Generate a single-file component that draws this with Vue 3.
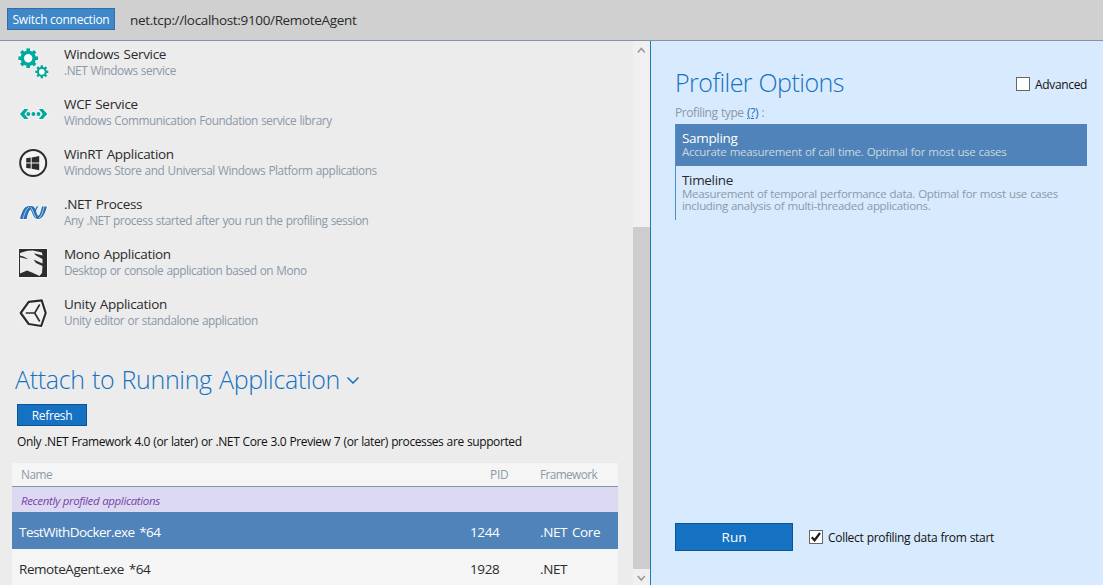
<script setup>
import { ref } from 'vue'

const apps = [
  { id: 'service', name: 'Windows Service', desc: '.NET Windows service' },
  { id: 'wcf', name: 'WCF Service', desc: 'Windows Communication Foundation service library' },
  { id: 'winrt', name: 'WinRT Application', desc: 'Windows Store and Universal Windows Platform applications' },
  { id: 'net', name: '.NET Process', desc: 'Any .NET process started after you run the profiling session' },
  { id: 'mono', name: 'Mono Application', desc: 'Desktop or console application based on Mono' },
  { id: 'unity', name: 'Unity Application', desc: 'Unity editor or standalone application' },
]
const processes = [
  { name: 'TestWithDocker.exe *64', pid: 1244, framework: '.NET Core' },
  { name: 'RemoteAgent.exe *64', pid: 1928, framework: '.NET' },
]
const selected = ref(1244)
const teeth = [0, 45, 90, 135, 180, 225, 270, 315]
</script>

<template>
  <div class="window">
    <header class="topbar">
      <button class="btn switch"><span>Switch connection</span></button>
      <span class="address">net.tcp://localhost:9100/RemoteAgent</span>
    </header>
    <div class="body">
      <section class="left">
        <div class="content">
          <ul class="apps">
            <li v-for="a in apps" :key="a.id" class="app">
              <svg class="icon" width="36" height="36" viewBox="0 0 36 36">
                <g v-if="a.id === 'service'" fill="#00a99d">
                  <g transform="translate(13.2 13.2)">
                    <circle r="9.5" fill="#f6f6f6" />
                    <rect v-for="t in teeth" :key="t" x="-1.8" y="-9.8" width="3.6" height="5" :transform="`rotate(${t})`" />
                    <circle r="6" fill="#fff" stroke="#00a99d" stroke-width="3.6" />
                  </g>
                  <g transform="translate(26.8 26.8)">
                    <circle r="6.5" fill="#f6f6f6" />
                    <rect v-for="t in teeth" :key="t" x="-1.2" y="-6.5" width="2.4" height="3" :transform="`rotate(${t})`" />
                    <circle r="3.9" fill="#fff" stroke="#00a99d" stroke-width="2" />
                  </g>
                </g>
                <g v-else-if="a.id === 'wcf'" transform="translate(.4 1)">
                  <path d="M9 13h4l-4 5 4 5H9l-4.500-5zM27.400 13h-4l4 5-4 5h4l4.500-5z" fill="#00a99d" stroke="#f6f6f6" stroke-width="1.8" paint-order="stroke" />
                  <g fill="#00a99d"><circle cx="12.9" cy="18" r="1.9" /><circle cx="18" cy="18" r="1.9" /><circle cx="23.1" cy="18" r="1.9" /></g>
                </g>
                <g v-else-if="a.id === 'winrt'" transform="translate(.2 1)">
                  <circle cx="18" cy="17" r="13" fill="#f4f4f4" stroke="#2d2d2d" stroke-width="2" />
                  <path d="M11 12.300l4.500-.7v5H11zM16.500 11.400l7.500-1.400v6.600h-7.500zM11 17.600h4.500v5l-4.500-.7zM16.500 17.600H24v6.600l-7.500-1.400z" fill="#2d2d2d" />
                </g>
                <g v-else-if="a.id === 'net'">
                  <path d="M5 24C7 15.500 9.500 11 14.500 11h2c3 0 4 3 5 6.500.7 2.200 1.300 3.300 2 3.300 1.500-1 2.500-5 3.500-9.300h5C30 18.500 27.500 24 23 24c-3.200 0-4.700-3-6-6.500l-1.500-3.200c-1.800 2-3 5-3.800 9.700z" fill="#2870b8" stroke="#f6f6f6" stroke-width="1.800" paint-order="stroke" />
                  <path d="M20.200 16.500c.6-2.400 1.300-4 2.300-5.200" fill="none" stroke="#2870b8" stroke-width="1.300" />
                  <path d="M8 24c1.300-5.500 3-9.500 6-12M29 11.500c-1.200 5.500-2.300 9-4.800 11.500M15.500 12c2.500 2.500 3 7.500 5.500 10.300" fill="none" stroke="#e6edf4" stroke-width=".7" />
                </g>
                <g v-else-if="a.id === 'mono'">
                  <path d="M3 3h30v30H3z" fill="#f5f5f5" />
                  <path d="M4 4h28v28H4z" fill="#2d2d2d" />
                  <path d="M5 28.500V8l5-1.500 3-.7 5-.3 9 2 .5 3L19 8.200l2 2.300 6.500 3.500v4.500l-9-4 2.500 3.500 6.500 3-.5 7-2.500 3L17 27.500l-5-2z" fill="#ececec" />
                  <path d="M5 10.500l4 1.200 4.500 2.600-4.500-1-4-1z" fill="#2d2d2d" />
                </g>
                <g v-else fill="none" stroke="#2d2d2d" stroke-linejoin="round" transform="translate(.2 .5)">
                  <path d="M5.500 17.500 13.500 6.300l13-1.500 4 12.700-4.500 13-12.500-2z" fill="#f2f2f2" stroke="#f7f7f7" stroke-width="4" />
                  <path d="M5.500 17.500 13.500 6.300l13-1.500 4 12.700-4.500 13-12.500-2z" stroke-width="2.2" />
                  <path d="M10.500 17.500h9L24.500 9M19.500 17.500l5 8.500" stroke-width="1.6" />
                </g>
              </svg>
              <div class="app-text">
                <div class="app-name">{{ a.name }}</div>
                <div class="app-desc">{{ a.desc }}</div>
              </div>
            </li>
          </ul>
          <h1 class="heading attach">
            <span>Attach to Running Application</span>
            <svg width="14" height="10" viewBox="0 0 14 10"><path d="M1.500 3.500 7 9l5.500-5.500" fill="none" stroke="#1571c1" stroke-width="1.500" /></svg>
          </h1>
          <button class="btn refresh"><span>Refresh</span></button>
          <p class="note">Only .NET Framework 4.0 (or later) or .NET Core 3.0 Preview 7 (or later) processes are supported</p>
          <div class="table">
            <div class="row thead"><span>Name</span><span class="pid-h">PID</span><span>Framework</span></div>
            <div class="group">Recently profiled applications</div>
            <div v-for="p in processes" :key="p.pid" class="row proc" :class="{ selected: p.pid === selected }" @click="selected = p.pid">
              <span class="pname">{{ p.name }}</span><span>{{ p.pid }}</span><span>{{ p.framework }}</span>
            </div>
          </div>
        </div>
        <div class="scrollbar">
          <svg width="17" height="17" viewBox="0 0 17 17"><path d="M4.800 11.500 8.300 7.500l3.500 4" fill="none" stroke="#9a9a9a" stroke-width="1.600" /></svg>
          <div class="thumb"></div>
          <svg width="17" height="16" viewBox="0 0 17 16"><path d="M4.800 7l3.500 4 3.500-4" fill="none" stroke="#9a9a9a" stroke-width="1.600" /></svg>
        </div>
      </section>
      <section class="right">
        <div class="options-head">
          <h1 class="heading options">Profiler Options</h1>
          <label class="check"><i class="box"></i><span class="adv">Advanced</span></label>
        </div>
        <div class="ptype">Profiling type <a>(?)</a> :</div>
        <div class="modes">
          <div class="mode active">
            <div class="mode-name">Sampling</div>
            <div class="mode-desc">Accurate measurement of call time. Optimal for most use cases</div>
          </div>
          <div class="mode">
            <div class="mode-name">Timeline</div>
            <div class="mode-desc">Measurement of temporal performance data. Optimal for most use cases<br>including analysis of multi-threaded applications.</div>
          </div>
        </div>
        <footer class="actions">
          <button class="btn run"><span>Run</span></button>
          <label class="check"><i class="box"><svg width="12" height="12" viewBox="0 0 12 12"><path d="M1.800 6.200 4.600 9.200 10 2" fill="none" stroke="#1b1b1b" stroke-width="2.200" /></svg></i><span class="collect">Collect profiling data from start</span></label>
        </footer>
      </section>
    </div>
  </div>
</template>

<style>
html, body { margin: 0; overflow: hidden; }
</style>

<style scoped>
.window { width: 1103px; height: 585px; display: flex; flex-direction: column; overflow: hidden; background: #ececec; font-family: "Segoe UI", "Open Sans", "Noto Sans", sans-serif; font-size: 12px; color: #2b2b2b; white-space: nowrap; }
.topbar { box-sizing: border-box; flex: none; height: 41px; padding-left: 7px; display: flex; align-items: flex-start; background: #d0d0d0; border-bottom: 1px solid #8495a6; }
.btn { box-sizing: border-box; flex: none; display: flex; align-items: center; justify-content: center; padding: 0; margin: 0; border: 1px solid #0b5394; background: #1571c1; color: #fff; font: 12px "Segoe UI", "Open Sans", sans-serif; white-space: nowrap; }
.switch { width: 108px; height: 22px; margin-top: 8px; background: #3e87c8; border-color: #2f6ea9; letter-spacing: -0.27px; }
.address { margin: 11px 0 0 15px; font-size: 13.5px; line-height: 19px; letter-spacing: -0.34px; }
.body { flex: 1; min-height: 0; display: flex; }
.left { width: 650px; flex: none; display: flex; }
.content { width: 633px; overflow: hidden; }
.apps { list-style: none; margin: 0; padding: 4px 0 0 15px; }
.app { height: 50px; display: flex; }
.icon { flex: none; }
.app-text { margin-left: 13px; }
.app-name { font-size: 13.5px; line-height: 19px; letter-spacing: -0.3px; word-spacing: 1px; }
.app-desc { margin-top: -1px; font-size: 11.8px; line-height: 14px; color: #8b99a8; letter-spacing: -0.44px; word-spacing: 0.6px; }
.heading { margin: 0; font-weight: 300; font-size: 25px; line-height: 34px; color: #1571c1; }
.attach { margin: 17px 0 0 15px; display: flex; align-items: center; gap: 6px; letter-spacing: -0.33px; word-spacing: 1.1px; }
.options { letter-spacing: -0.53px; word-spacing: 0.5px; }
.refresh { width: 70px; height: 22px; margin: 8px 0 0 17px; letter-spacing: -0.35px; }
.note { margin: 8px 0 0 17px; line-height: 16px; color: #111; letter-spacing: -0.4px; word-spacing: 0.5px; }
.table { width: 606px; margin: 13px 0 0 12px; background: #f5f5f5; }
.row { display: grid; grid-template-columns: 451px 70px 1fr; padding-left: 7px; align-items: center; }
.thead { height: 23px; font-size: 11.8px; letter-spacing: -0.58px; color: #8b99a8; border-bottom: 1px solid #8495a6; }
.thead span { margin-top: -2px; }
.thead span:first-child { padding-left: 2px; letter-spacing: -0.45px; }
.thead .pid-h { padding-left: 20px; letter-spacing: -0.2px; }
.group { height: 25px; padding: 2px 0 0 9px; box-sizing: border-box; line-height: 24px; font-size: 11.5px; font-style: italic; color: #7b3fa8; background: #dcdaf2; letter-spacing: -0.38px; word-spacing: 0.4px; }
.proc { height: 37px; padding-top: 3px; box-sizing: border-box; font-size: 13.5px; letter-spacing: -0.4px; word-spacing: 1.8px; }
.pname { letter-spacing: -0.43px; }
.selected { background: #4f83ba; color: #fff; }
.selected .pname { letter-spacing: -0.56px; }
.scrollbar { width: 17px; display: flex; flex-direction: column; justify-content: flex-start; background: #f0f0f0; }
.scrollbar svg { display: block; flex: none; }
.thumb { height: 342px; margin-top: 169px; background: #cdcdcd; }
.right { box-sizing: border-box; flex: 1; min-width: 0; padding: 24px 16px 34px 24px; display: flex; flex-direction: column; background: #d8eafe; border-left: 1px solid #1f7ab8; }
.options-head { display: flex; justify-content: space-between; }
.check { display: flex; align-items: center; height: 16px; color: #111; }
.options-head .check { margin-top: 11px; }
.box { box-sizing: border-box; width: 14px; height: 14px; margin-right: 5px; border: 1px solid #666; background: #fff; }
.box svg { display: block; }
.adv { letter-spacing: -0.36px; }
.collect { letter-spacing: -0.31px; word-spacing: 0.4px; }
.ptype { margin-top: 4px; line-height: 19px; height: 21px; color: #8b99a8; letter-spacing: -0.42px; word-spacing: 0.7px; }
.ptype a { color: #1571c1; text-decoration: underline; }
.modes { border-left: 1px solid #4f8fd0; }
.mode { box-sizing: border-box; height: 42px; padding: 6px 0 0 6px; }
.mode + .mode { height: 54px; }
.mode-name { font-size: 13.5px; line-height: 17px; letter-spacing: -0.33px; }
.mode-desc { margin-top: -1px; font-size: 11.5px; line-height: 12px; color: #8b99a8; letter-spacing: -0.31px; word-spacing: 0.5px; }
.active { background: #4f83ba; color: #fff; }
.active .mode-desc { color: #c9d9dc; }
.actions { margin-top: auto; display: flex; align-items: center; }
.run { width: 118px; height: 28px; margin-right: 16px; font-size: 13.5px; }
</style>
